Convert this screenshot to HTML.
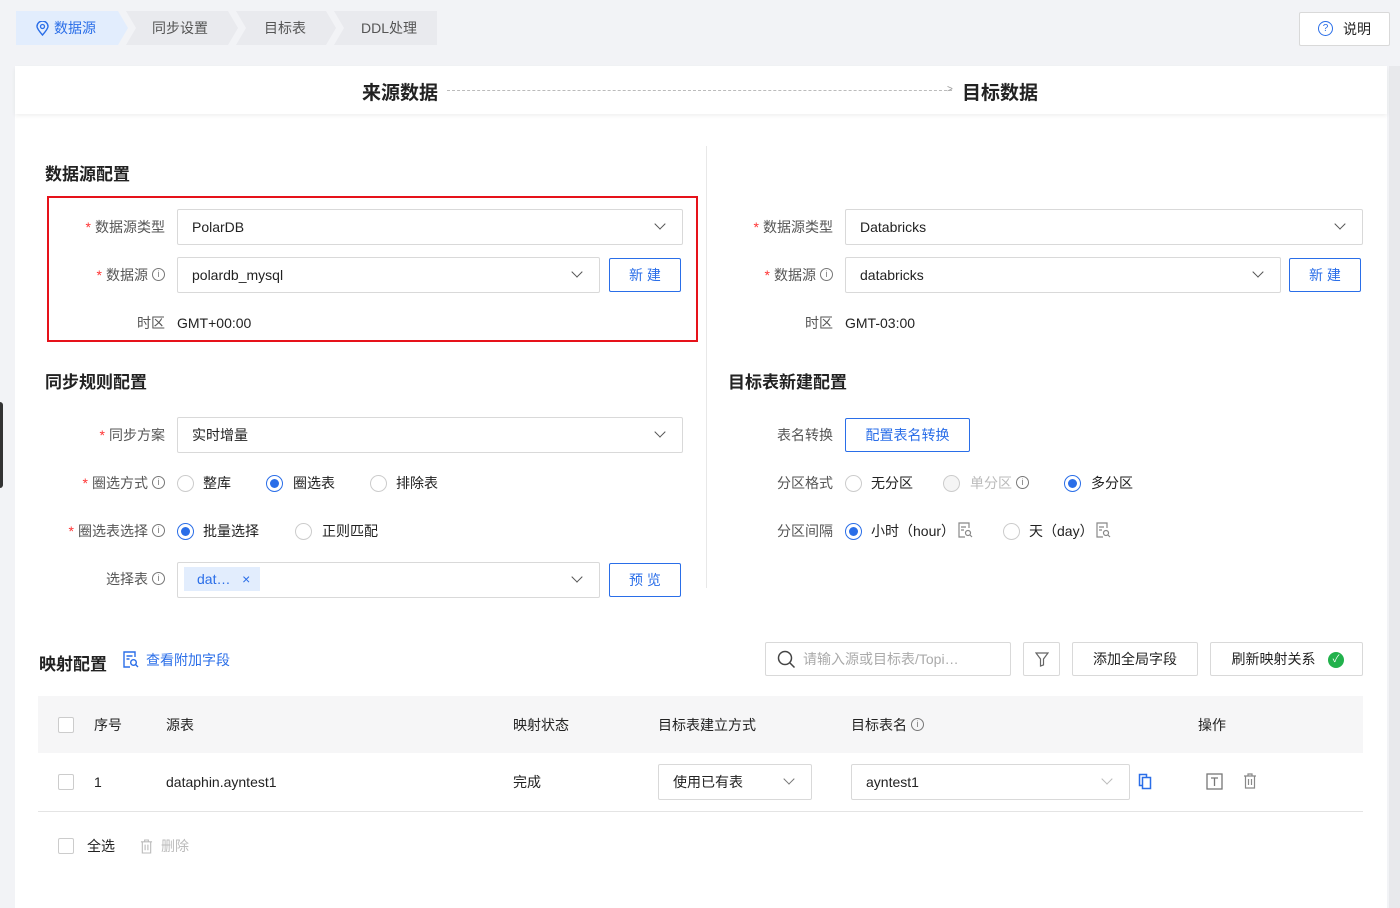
<!DOCTYPE html>
<html><head><meta charset="utf-8"><style>
*{box-sizing:border-box;margin:0;padding:0}
body{width:1400px;height:908px;background:#f2f3f6;font-family:"Liberation Sans","Noto Sans CJK SC",sans-serif;font-size:14px;color:#333;position:relative;overflow:hidden}
.a{position:absolute}
.step{position:absolute;top:11px;height:34px;line-height:34px;background:#e9eaee;color:#555;font-size:14px;clip-path:polygon(0 0,calc(100% - 10px) 0,100% 50%,calc(100% - 10px) 100%,0 100%,10px 50%)}
.card{position:absolute;left:15px;top:66px;width:1372px;height:842px;background:#fff}
.h{font-size:17px;font-weight:bold;color:#222}
.lbl{position:absolute;text-align:right;color:#555;width:150px;line-height:20px}
.req{color:#f33;margin-right:4px}
.inp{position:absolute;height:36px;border:1px solid #d9d9d9;border-radius:2px;background:#fff;line-height:34px;padding-left:14px;color:#222}
.chev{position:absolute;right:18px;top:10px;width:8px;height:8px;border-right:1.3px solid #555;border-bottom:1.3px solid #555;transform:rotate(45deg)}
.btn{position:absolute;height:34px;border:1px solid #2a6ee8;color:#2a6ee8;text-align:center;line-height:32px;border-radius:2px;background:#fff}
.gb{position:absolute;height:34px;border:1px solid #d9d9d9;text-align:center;line-height:32px;border-radius:2px;background:#fff;color:#222}
.info{display:inline-block;width:13px;height:13px;border:1px solid #777;border-radius:50%;font-size:9px;line-height:11px;text-align:center;color:#777;vertical-align:middle;margin-left:4px;margin-top:-3px;font-style:normal}
.rad{position:absolute;width:17px;height:17px;border:1px solid #ccc;border-radius:50%;background:#fff}
.rad.on{border-color:#2a6ee8}
.rad.on:after{content:"";position:absolute;left:3px;top:3px;width:9px;height:9px;border-radius:50%;background:#2a6ee8}
.t{position:absolute;line-height:20px;color:#222}
.cb{position:absolute;width:16px;height:16px;border:1px solid #ccc;border-radius:2px;background:#fff}
</style></head><body>
<div class="step" style="left:16px;width:112px;background:#e2edfd;color:#2a6ee8;clip-path:polygon(0 0,calc(100% - 10px) 0,100% 50%,calc(100% - 10px) 100%,0 100%)"><svg style="position:absolute;left:20px;top:10px" width="13" height="15" viewBox="0 0 13 15"><path d="M6.5 14C3 10 1 7.5 1 5.5a5.5 5.5 0 0 1 11 0C12 7.5 10 10 6.5 14z" fill="none" stroke="#2a6ee8" stroke-width="1.4"/><circle cx="6.5" cy="5.5" r="2" fill="none" stroke="#2a6ee8" stroke-width="1.3"/></svg><span style="padding-left:38px">数据源</span></div>
<div class="step" style="left:126px;width:112px"><span style="padding-left:26px">同步设置</span></div>
<div class="step" style="left:236px;width:100px"><span style="padding-left:28px">目标表</span></div>
<div class="step" style="left:334px;width:103px;clip-path:polygon(0 0,100% 0,100% 100%,0 100%,10px 50%)"><span style="padding-left:27px">DDL处理</span></div>
<div class="gb" style="left:1299px;top:12px;width:91px;height:34px;line-height:32px"><span style="display:inline-block;width:15px;height:15px;border:1.3px solid #2a6ee8;border-radius:50%;color:#2a6ee8;font-size:10px;line-height:13px;vertical-align:middle;margin-top:-3px;margin-right:10px">?</span>说明</div>
<div class="a" style="left:1389px;top:66px;width:11px;height:842px;background:#e8e9ec"></div>
<div class="a" style="left:0;top:402px;width:3px;height:86px;background:#333;border-radius:0 3px 3px 0"></div>
<div class="card">
 <div class="a" style="left:0;top:0;width:1372px;height:48px;box-shadow:0 2px 4px rgba(0,0,0,.06)"></div>
 <div class="a h" style="left:347px;top:12px;font-size:19px">来源数据</div>
 <div class="a" style="left:432px;top:24px;width:505px;border-top:1px dashed #bbb"></div>
 <div class="a" style="left:932px;top:18px;color:#999;font-size:10px">&gt;</div>
 <div class="a h" style="left:947px;top:12px;font-size:19px">目标数据</div>
 <div class="a" style="left:691px;top:80px;width:1px;height:442px;background:#e8e8e8"></div>
</div>
<div class="a h" style="left:45px;top:160px">数据源配置</div>
<div class="a" style="left:47px;top:196px;width:651px;height:146px;border:2px solid #e6121a"></div>
<div class="lbl" style="left:15px;top:217px"><span class="req">*</span>数据源类型</div>
<div class="inp" style="left:177px;top:209px;width:506px">PolarDB<span class="chev"></span></div>
<div class="lbl" style="left:15px;top:265px"><span class="req">*</span>数据源<i class="info">i</i></div>
<div class="inp" style="left:177px;top:257px;width:423px">polardb_mysql<span class="chev"></span></div>
<div class="btn" style="left:609px;top:258px;width:72px">新 建</div>
<div class="lbl" style="left:15px;top:313px">时区</div>
<div class="t" style="left:177px;top:313px">GMT+00:00</div>

<div class="a h" style="left:45px;top:368px">同步规则配置</div>
<div class="lbl" style="left:15px;top:425px"><span class="req">*</span>同步方案</div>
<div class="inp" style="left:177px;top:417px;width:506px">实时增量<span class="chev"></span></div>
<div class="lbl" style="left:15px;top:473px"><span class="req">*</span>圈选方式<i class="info">i</i></div>
<div class="rad" style="left:177px;top:475px"></div><div class="t" style="left:203px;top:473px">整库</div>
<div class="rad on" style="left:266px;top:475px"></div><div class="t" style="left:293px;top:473px">圈选表</div>
<div class="rad" style="left:370px;top:475px"></div><div class="t" style="left:396px;top:473px">排除表</div>
<div class="lbl" style="left:15px;top:521px"><span class="req">*</span>圈选表选择<i class="info">i</i></div>
<div class="rad on" style="left:177px;top:523px"></div><div class="t" style="left:203px;top:521px">批量选择</div>
<div class="rad" style="left:295px;top:523px"></div><div class="t" style="left:322px;top:521px">正则匹配</div>
<div class="lbl" style="left:15px;top:569px">选择表<i class="info">i</i></div>
<div class="inp" style="left:177px;top:562px;width:423px;padding-left:6px"><span style="display:inline-block;background:#e2edfd;color:#2a6ee8;height:24px;line-height:24px;padding:0 10px 0 13px;vertical-align:1px">dat… &nbsp;&nbsp;×</span><span class="chev"></span></div>
<div class="btn" style="left:609px;top:563px;width:72px">预 览</div>

<div class="lbl" style="left:683px;top:217px"><span class="req">*</span>数据源类型</div>
<div class="inp" style="left:845px;top:209px;width:518px">Databricks<span class="chev"></span></div>
<div class="lbl" style="left:683px;top:265px"><span class="req">*</span>数据源<i class="info">i</i></div>
<div class="inp" style="left:845px;top:257px;width:436px">databricks<span class="chev"></span></div>
<div class="btn" style="left:1289px;top:258px;width:72px">新 建</div>
<div class="lbl" style="left:683px;top:313px">时区</div>
<div class="t" style="left:845px;top:313px">GMT-03:00</div>
<div class="a h" style="left:728px;top:368px">目标表新建配置</div>
<div class="lbl" style="left:683px;top:425px">表名转换</div>
<div class="btn" style="left:845px;top:418px;width:125px">配置表名转换</div>
<div class="lbl" style="left:683px;top:473px">分区格式</div>
<div class="rad" style="left:845px;top:475px"></div><div class="t" style="left:871px;top:473px">无分区</div>
<div class="rad" style="left:943px;top:475px;background:#f5f5f5"></div><div class="t" style="left:970px;top:473px;color:#bbb">单分区<i class="info">i</i></div>
<div class="rad on" style="left:1064px;top:475px"></div><div class="t" style="left:1091px;top:473px">多分区</div>
<div class="lbl" style="left:683px;top:521px">分区间隔</div>
<div class="rad on" style="left:845px;top:523px"></div><div class="t" style="left:871px;top:521px">小时（hour）</div>
<svg class="a" style="left:958px;top:522px" width="15" height="16" viewBox="0 0 15 16"><path d="M11 6V1H1v14h6" fill="none" stroke="#888" stroke-width="1.2"/><circle cx="10" cy="11" r="2.5" fill="none" stroke="#888" stroke-width="1.2"/><path d="M12 13l2 2M3 5h5M3 8h3" stroke="#888" stroke-width="1.2"/></svg>
<div class="rad" style="left:1003px;top:523px"></div><div class="t" style="left:1029px;top:521px">天（day）</div>
<svg class="a" style="left:1096px;top:522px" width="15" height="16" viewBox="0 0 15 16"><path d="M11 6V1H1v14h6" fill="none" stroke="#888" stroke-width="1.2"/><circle cx="10" cy="11" r="2.5" fill="none" stroke="#888" stroke-width="1.2"/><path d="M12 13l2 2M3 5h5M3 8h3" stroke="#888" stroke-width="1.2"/></svg>

<div class="a h" style="left:39px;top:650px">映射配置</div>
<svg class="a" style="left:123px;top:651px" width="16" height="17" viewBox="0 0 16 17"><path d="M12 6V1H1v15h6" fill="none" stroke="#2a6ee8" stroke-width="1.4"/><circle cx="10.5" cy="11.5" r="2.8" fill="none" stroke="#2a6ee8" stroke-width="1.4"/><path d="M12.5 13.5l2.5 2.5M3.5 5h6M3.5 8h3" stroke="#2a6ee8" stroke-width="1.4"/></svg>
<div class="a" style="left:146px;top:650px;color:#2a6ee8;line-height:20px">查看附加字段</div>
<div class="inp" style="left:765px;top:642px;width:246px;height:34px;line-height:32px;padding-left:37px;color:#aaa"><svg style="position:absolute;left:11px;top:7px" width="19" height="19" viewBox="0 0 19 19"><circle cx="8" cy="8" r="6.5" fill="none" stroke="#444" stroke-width="1.5"/><path d="M13 13l4.5 4.5" stroke="#444" stroke-width="1.5"/></svg>请输入源或目标表/Topi…</div>
<div class="gb" style="left:1023px;top:642px;width:37px"><svg style="position:absolute;left:11px;top:9px" width="14" height="15" viewBox="0 0 14 15"><path d="M1 1h12L8.5 7v6l-3 1V7z" fill="none" stroke="#666" stroke-width="1.2"/></svg></div>
<div class="gb" style="left:1072px;top:642px;width:126px">添加全局字段</div>
<div class="gb" style="left:1210px;top:642px;width:153px;padding-right:26px">刷新映射关系<span style="position:absolute;right:18px;top:9px;width:16px;height:16px;border-radius:50%;background:#22b14c;color:#fff;font-size:10px;line-height:16px">✓</span></div>

<div class="a" style="left:38px;top:696px;width:1325px;height:57px;background:#f6f6f7"></div>
<div class="cb" style="left:58px;top:717px"></div>
<div class="t" style="left:94px;top:715px">序号</div>
<div class="t" style="left:166px;top:715px">源表</div>
<div class="t" style="left:513px;top:715px">映射状态</div>
<div class="t" style="left:658px;top:715px">目标表建立方式</div>
<div class="t" style="left:851px;top:715px">目标表名<i class="info">i</i></div>
<div class="t" style="left:1198px;top:715px">操作</div>
<div class="cb" style="left:58px;top:774px"></div>
<div class="t" style="left:94px;top:772px">1</div>
<div class="t" style="left:166px;top:772px">dataphin.ayntest1</div>
<div class="t" style="left:513px;top:772px">完成</div>
<div class="inp" style="left:658px;top:764px;width:154px">使用已有表<span class="chev" style="border-color:#777"></span></div>
<div class="inp" style="left:851px;top:764px;width:279px">ayntest1<span class="chev" style="border-color:#bbb"></span></div>
<svg class="a" style="left:1138px;top:773px" width="14" height="17" viewBox="0 0 14 17"><path d="M1.5 1.5h7v11h-7z" fill="none" stroke="#2a6ee8" stroke-width="1.5"/><path d="M4.5 4.5h8v11h-8z" fill="#fff" stroke="#2a6ee8" stroke-width="1.5"/></svg>
<svg class="a" style="left:1206px;top:773px" width="17" height="17" viewBox="0 0 17 17"><rect x="1" y="1" width="15" height="15" fill="none" stroke="#777" stroke-width="1.3"/><path d="M5 5h7M8.5 5v8" stroke="#777" stroke-width="1.3"/></svg>
<svg class="a" style="left:1243px;top:773px" width="14" height="16" viewBox="0 0 14 16"><path d="M1 3h12M5 3V1h4v2M2.5 3v12h9V3M5.5 6v6M8.5 6v6" fill="none" stroke="#888" stroke-width="1.2"/></svg>
<div class="a" style="left:38px;top:811px;width:1325px;height:1px;background:#e4e4e4"></div>
<div class="cb" style="left:58px;top:838px"></div>
<div class="t" style="left:87px;top:836px">全选</div>
<svg class="a" style="left:140px;top:839px" width="13" height="15" viewBox="0 0 14 16"><path d="M1 3h12M5 3V1h4v2M2.5 3v12h9V3M5.5 6v6M8.5 6v6" fill="none" stroke="#bbb" stroke-width="1.2"/></svg>
<div class="t" style="left:161px;top:836px;color:#bbb">删除</div>
</body></html>
